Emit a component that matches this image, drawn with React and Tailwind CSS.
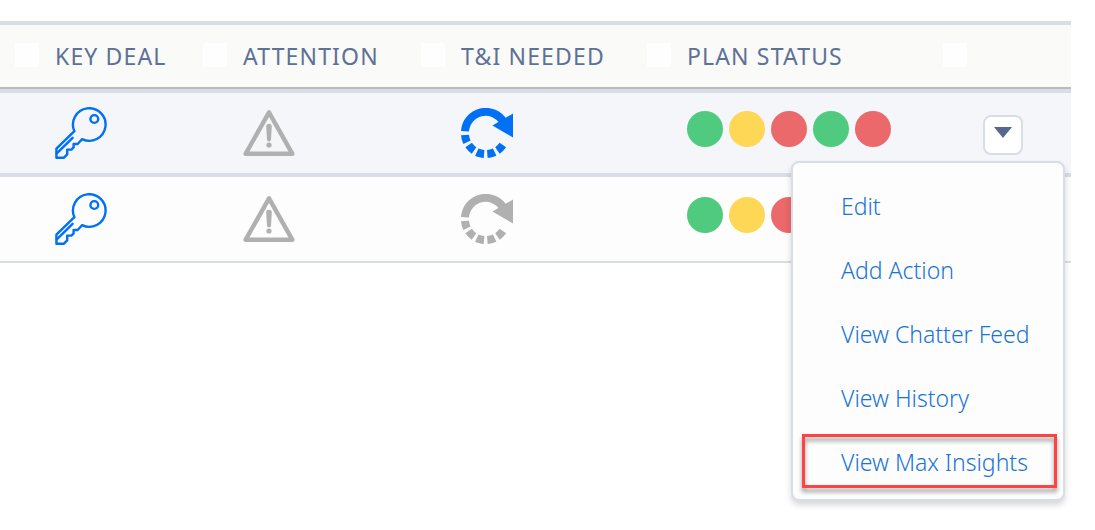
const COLUMNS = [
  { label: "Key Deal", width: "w-[188px]" },
  { label: "Attention", width: "w-[218px]" },
  { label: "T&I Needed", width: "w-[226px]" },
  { label: "Plan Status", width: "w-[296px]" },
];

const ROWS = [
  { id: 1, synced: true, plan: ["green", "yellow", "red", "green", "red"], menu: true },
  { id: 2, synced: false, plan: ["green", "yellow", "red", "green", "red"], menu: false },
];

const MENU_ITEMS = [
  { label: "Edit" },
  { label: "Add Action" },
  { label: "View Chatter Feed" },
  { label: "View History" },
  { label: "View Max Insights", highlighted: true },
];

const DOT_COLORS = {
  green: "bg-[#4fca7f]",
  yellow: "bg-[#ffd757]",
  red: "bg-[#eb686b]",
};

function KeyIcon() {
  return (
    <svg
      className="block"
      width="52"
      height="52"
      viewBox="0 0 52 52"
      fill="none"
      stroke="#0070f5"
      strokeWidth="2.4"
      strokeLinejoin="round"
      strokeLinecap="round"
      role="img"
      aria-label="Key deal"
    >
      <path d="M19.4 24.2A16.3 16.3 0 1 1 27.2 32.2L22.6 37H18.6V40.4L16.4 42.6H12.2V47.4L9 50.7H1.4V41.6Z" />
      <circle cx="39.3" cy="12" r="3.9" />
      <path d="M1.8 46.4 17.6 30.8" />
    </svg>
  );
}

function AttentionIcon() {
  return (
    <svg className="block" width="52" height="48" viewBox="0 0 52 48" role="img" aria-label="Attention">
      <path d="M26 3.4 2.6 44.8H49.4Z" fill="none" stroke="#b0b0b0" strokeWidth="4.4" strokeLinejoin="round" />
      <path d="M23.2 17.6a2.8 2.8 0 0 1 5.6 0L28 30.4a2 2 0 0 1-4 0Z" fill="#b0b0b0" />
      <circle cx="26" cy="36" r="2.6" fill="#b0b0b0" />
    </svg>
  );
}

function RefreshIcon({ active }) {
  const color = active ? "#0070f5" : "#b0b0b0";
  return (
    <svg className="block" width="52" height="50" viewBox="0 0 52 50" role="img" aria-label="T&I needed">
      <path d="M4 23.2A20.8 20.8 0 0 1 42.6 14" fill="none" stroke={color} strokeWidth="8" />
      <path
        d="M4 27A20.8 20.8 0 0 0 42.1 36.7"
        fill="none"
        stroke={color}
        strokeWidth="8"
        strokeDasharray="7.6 3.2"
      />
      <path d="M52 5.6V29.4L31.4 17.6Z" fill={color} />
    </svg>
  );
}

function PlanStatus({ plan }) {
  return (
    <div className="flex gap-1.5 pb-2">
      {plan.map((status, i) => (
        <span key={i} className={`size-9 shrink-0 rounded-full ${DOT_COLORS[status]}`} />
      ))}
    </div>
  );
}

function RowMenu() {
  return (
    <ul className="absolute top-[46px] -right-[42px] z-10 w-[274px] rounded-lg border-2 border-[#d8dde6] bg-[#fdfdfd] pt-3 pb-1 shadow-[0_4px_6px_rgba(0,0,0,0.16)]">
      {MENU_ITEMS.map((item) => (
        <li key={item.label} className="relative">
          <a href="#" className="flex h-16 items-center pb-0.5 pl-12 whitespace-nowrap text-[#1874d6]">
            {item.label}
          </a>
          {item.highlighted && (
            <span className="pointer-events-none absolute top-[3px] right-1.5 bottom-[7px] left-[9px] border-3 border-[#ff4343] drop-shadow-[0_4px_2px_rgba(0,0,0,0.4)]" />
          )}
        </li>
      ))}
    </ul>
  );
}

function RowActions() {
  return (
    <div className="relative mt-1 size-10">
      <button
        type="button"
        aria-label="Row actions"
        aria-expanded="true"
        className="flex size-10 justify-center rounded-lg border-2 border-[#d8dde6] bg-white pt-2.5"
      >
        <svg width="18" height="11" viewBox="0 0 18 11" fill="#54698d">
          <path d="M0 0H18L9 11Z" />
        </svg>
      </button>
      <RowMenu />
    </div>
  );
}

export default function App() {
  return (
    <main className="min-h-screen bg-white pt-[21px] pr-6 font-['Noto_Sans',sans-serif] text-[23px] font-[350]">
      <table className="w-full table-fixed border-separate border-spacing-0">
        <thead>
          <tr className="bg-[#fafaf8]">
            {COLUMNS.map((col) => (
              <th
                key={col.label}
                scope="col"
                className={`h-[68px] border-t-4 border-b-2 border-t-[#d8dde6] border-b-[#bbbbbb] p-0 pl-[15px] text-left font-normal text-[#5d7196] ${col.width}`}
              >
                <div className="flex items-center gap-4">
                  <span className="mb-0.5 size-6 shrink-0 bg-[#fefefe]" />
                  <span className="tracking-wider whitespace-nowrap uppercase">{col.label}</span>
                </div>
              </th>
            ))}
            <th
              scope="col"
              aria-label="Actions"
              className="border-t-4 border-b-2 border-t-[#d8dde6] border-b-[#bbbbbb] p-0 pl-[15px]"
            >
              <span className="mb-0.5 block size-6 bg-[#fefefe]" />
            </th>
          </tr>
        </thead>
        <tbody>
          {ROWS.map((row) => (
            <tr
              key={row.id}
              className="h-[84px] bg-[#fdfdfd] first:bg-[#f4f6fa] *:border-[#d8dde6] *:p-0 *:pl-[55px] *:align-middle first:*:border-t-4 last:h-[90px] last:*:border-t-4 last:*:border-b-2"
            >
              <td>
                <KeyIcon />
              </td>
              <td>
                <AttentionIcon />
              </td>
              <td>
                <RefreshIcon active={row.synced} />
              </td>
              <td>
                <PlanStatus plan={row.plan} />
              </td>
              <td>{row.menu && <RowActions />}</td>
            </tr>
          ))}
        </tbody>
      </table>
    </main>
  );
}
